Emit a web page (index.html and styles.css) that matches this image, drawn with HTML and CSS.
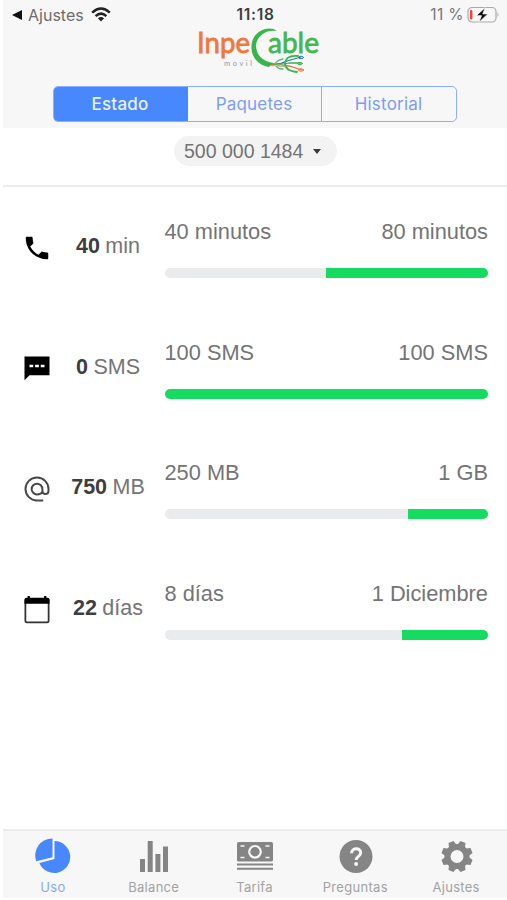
FILE: index.html
```html
<!DOCTYPE html>
<html lang="es">
<head>
<meta charset="utf-8">
<title>Inpecable móvil</title>
<link rel="stylesheet" href="styles.css">
</head>
<body>
<div class="app">
  <header class="header">
    <div class="status">
      <div class="status-left">
        <svg class="back" viewBox="0 0 10 10"><path d="M10 0v10L0 5z"/></svg>
        <span class="back-label">Ajustes</span>
        <svg class="wifi" viewBox="0 0 20 15"><g fill="none" stroke="#222" stroke-width="2.5"><path d="M1.2 5.6Q10-2.6 18.8 5.6"/><path d="M4.6 9.1Q10 4.2 15.4 9.1"/></g><path d="M6.9 11.2Q10 8.7 13.1 11.2L10 14.5z" fill="#222"/></svg>
      </div>
      <span class="clock">11:18</span>
      <div class="status-right">
        <span class="percent">11 %</span>
        <svg class="battery" viewBox="0 0 32 18"><rect x="1" y="1.5" width="28" height="14.5" rx="4" fill="none" stroke="#a9a9a9" stroke-width="1.2"/><path d="M30.5 6.3q2 2.4 0 4.8z" fill="#a9a9a9"/><rect x="3" y="4" width="2.4" height="9.5" rx="1" fill="#ff3b35"/><path d="M18.2 1.5L9.3 9.7h5.2L11.7 16.5l9.2-8.6h-5.1z" fill="#0b0b0b" stroke="#f7f7f7" stroke-width=".8"/></svg>
      </div>
    </div>
    <svg class="logo" viewBox="0 0 128 48">
      <text class="logo-inpe" x="2" y="25" textLength="53" lengthAdjust="spacingAndGlyphs">Inpe</text>
      <text class="logo-able" x="73" y="25" textLength="51" lengthAdjust="spacingAndGlyphs">able</text>
      <text class="logo-movil" x="29" y="38" textLength="28">movil</text>
      <path d="M82 3C75-3 60 2 57 14C54 28 63 37 74 39L78 35C67 33 61 27 61 17C62 8 71 1 82 3z" fill="#39b54a"/>
      <g fill="none" stroke-width="1.3" stroke-linecap="round">
        <path d="M76 36Q85 37 92 33L106 29" stroke="#2878ad"/>
        <path d="M76 36Q87 37 94 35L106 35" stroke="#39b54a"/>
        <path d="M76 37Q85 38 94 38L107 42" stroke="#ef7135"/>
        <path d="M88 31Q79 33 81 37Q82 41 88 41" stroke="#55b976"/>
        <path d="M103 28Q91 27 90 35Q90 43 102 44" stroke="#39b54a" stroke-width="1.8"/>
        <ellipse cx="106" cy="29.500" rx="2.500" ry="1.300" stroke="#2878ad" stroke-width="1"/>
        <ellipse cx="105" cy="35.500" rx="2.500" ry="1.100" stroke="#39b54a" stroke-width="1"/>
        <ellipse cx="106" cy="42" rx="2.500" ry="1.200" stroke="#ef7135" stroke-width="1"/>
        <path d="M77 38l7-1 6 2" stroke="#d5bba4" stroke-width="1"/>
      </g>
    </svg>
    <nav class="segments">
      <span class="segment active">Estado</span>
      <span class="segment">Paquetes</span>
      <span class="segment">Historial</span>
    </nav>
  </header>

  <div class="line-picker">
    <div class="pill"><span>500 000 1484</span><i class="caret"></i></div>
  </div>

  <main class="usage">
    <section class="row">
      <svg class="icon" viewBox="0 0 24 24"><path d="M6.6 10.8c1.4 2.8 3.8 5.1 6.6 6.6l2.2-2.2c.3-.3.7-.4 1-.2 1.1.4 2.3.6 3.6.6.6 0 1 .4 1 1V20c0 .6-.4 1-1 1C10.600 21 3 13.400 3 4c0-.6.4-1 1-1h3.500c.6 0 1 .4 1 1 0 1.200.2 2.400.6 3.600.1.3 0 .7-.2 1z"/></svg>
      <div class="remaining"><b>40</b> min</div>
      <div class="meter"><div class="labels"><span>40 minutos</span><span>80 minutos</span></div><div class="track"><div class="fill" style="width:50%"></div></div></div>
    </section>
    <section class="row">
      <svg class="icon" viewBox="0 0 24 24"><path d="M2 2h20v15H6l-4 4z"/><path d="M6 8.500h3v2H6zm4.500 0h3v2h-3zM15 8.500h3v2h-3z" fill="#fff"/></svg>
      <div class="remaining"><b>0</b> SMS</div>
      <div class="meter"><div class="labels"><span>100 SMS</span><span>100 SMS</span></div><div class="track"><div class="fill" style="width:100%"></div></div></div>
    </section>
    <section class="row">
      <svg class="icon" viewBox="0 0 24 24"><path fill="none" stroke="#484848" stroke-width="1.600" d="M17 21.200h-5A9.200 9.200 0 1 1 21.200 12v1.400c0 3.500-4.900 3.500-4.900 0V12A4.300 4.300 0 1 0 12 16.300c2.200 0 3.900-1 4.500-2.600"/></svg>
      <div class="remaining"><b>750</b> MB</div>
      <div class="meter"><div class="labels"><span>250 MB</span><span>1 GB</span></div><div class="track"><div class="fill" style="width:24.7%"></div></div></div>
    </section>
    <section class="row">
      <svg class="icon" viewBox="0 0 24 24"><rect x="2.700" y="3" width="18.600" height="18.800" rx="1.300" fill="none" stroke="#333" stroke-width="1.400"/><path d="M2 7V3.500Q2 2.200 3.500 2.200H4.500V.8h1.800V2.200h11.400V.8h1.800V2.200h1Q22 2.200 22 3.500V7z"/></svg>
      <div class="remaining"><b>22</b> días</div>
      <div class="meter"><div class="labels"><span>8 días</span><span>1 Diciembre</span></div><div class="track"><div class="fill" style="width:26.600%"></div></div></div>
    </section>
  </main>

  <footer class="tabs">
    <div class="tab current"><svg viewBox="0 0 36 36"><path d="M19.500 3A16 16 0 1 1 4.400 25L19.500 21z"/><path d="M17.500.5V19.300L1.200 23.200A17 17 0 0 1 17.500.5z"/></svg><span>Uso</span></div>
    <div class="tab"><svg viewBox="0 0 36 36"><path d="M4 21h5v13H4zm7.700-18h5v31h-5zm7.700 13h5v18h-5zM27 8.500h5V34h-5z"/></svg><span>Balance</span></div>
    <div class="tab"><svg viewBox="0 0 36 36"><rect y="4" width="36" height="19.500" rx="1.500"/><circle cx="18" cy="13.800" r="5.800" fill="none" stroke="#f7f7f7" stroke-width="2.200"/><path d="M3.500 8h4M28.500 8h4M3.500 19.500h4M28.500 19.500h4" stroke="#f7f7f7" stroke-width="1.500"/><path d="M0 25.500h36v2H0zm0 4.200h36v2H0z"/></svg><span>Tarifa</span></div>
    <div class="tab"><svg viewBox="0 0 36 36"><circle cx="18" cy="18.500" r="16.500"/><path d="M13.500 15.200c.3-6 9.200-5.600 9.200-.5 0 3.600-4.500 3.700-4.500 7.300" fill="none" stroke="#f7f7f7" stroke-width="3"/><circle cx="18.100" cy="26" r="2" fill="#f7f7f7"/></svg><span>Preguntas</span></div>
    <div class="tab"><svg viewBox="0 0 36 36"><g transform="translate(18 18.500)"><circle r="9.500" fill="none" stroke="#858585" stroke-width="6"/><path d="M-4.300-10L-2.700-15.700H2.700L4.300-10zM-4.300 10L-2.700 15.700H2.700L4.300 10z" transform="rotate(22.500)"/><path d="M-4.300-10L-2.700-15.700H2.700L4.300-10zM-4.300 10L-2.700 15.700H2.700L4.300 10z" transform="rotate(67.500)"/><path d="M-4.300-10L-2.700-15.700H2.700L4.300-10zM-4.300 10L-2.700 15.700H2.700L4.300 10z" transform="rotate(112.500)"/><path d="M-4.300-10L-2.700-15.700H2.700L4.300-10zM-4.300 10L-2.700 15.700H2.700L4.300 10z" transform="rotate(157.500)"/></g></svg><span>Ajustes</span></div>
  </footer>
</div>
</body>
</html>
```
FILE: styles.css
```css
* { box-sizing: border-box; }
body { margin: 0; background: #fff; font-family: "Liberation Sans", Arial, sans-serif; color: #747474; }
svg { display: block; flex: none; }
.app { height: 898px; margin-left: 3px; display: flex; flex-direction: column; }
.header { height: 128px; background: #f7f7f7; display: flex; flex-direction: column; align-items: center; flex: none; }
.status { width: 100%; height: 28px; display: grid; grid-template-columns: 1fr auto 1fr; align-items: center; padding: 0 8px 0 9px; font: 16px/28px Inter, sans-serif; }
.status-left, .status-right { display: flex; align-items: center; }
.status-right { justify-content: flex-end; }
.back { width: 10px; height: 10px; fill: #111; }
.back-label { margin-left: 6px; color: #6c6c6c; }
.wifi { width: 20px; height: 15px; margin-left: 7px; }
.clock { color: #3d3d3d; font-weight: 600; font-size: 15.500px; letter-spacing: .7px; padding-top: 1px; }
.percent { color: #777; font-size: 15.500px; letter-spacing: .4px; padding-top: 1px; }
.battery { width: 32px; height: 18px; margin-left: 3px; }
.logo { width: 128px; height: 48px; margin-left: 8px; overflow: visible; }
.logo text { font-family: Lato, sans-serif; }
.logo .logo-inpe, .logo .logo-able { font-size: 29.500px; }
.logo-inpe { fill: #f0783c; stroke: #f0783c; stroke-width: .8px; }
.logo-able { fill: #42b855; stroke: #42b855; stroke-width: .8px; }
.logo .logo-movil { font-size: 7.500px; fill: #9298a2; }
.segments { width: 404px; height: 36px; margin: 10px 1px 0 0; border: 1.500px solid #8fadff; border-radius: 5px; display: grid; grid-template-columns: repeat(3, 1fr); overflow: hidden; font: 17px/35px Inter, sans-serif; letter-spacing: .2px; text-align: center; color: #7c9df5; }
.segment { margin-left: -1px; }
.segment + .segment + .segment { border-left: 1.500px solid #8fadff; }
.segment.active { background: #4788ff; color: #eaf1ff; font-weight: 500; }
.line-picker { height: 59px; flex: none; border-bottom: 2px solid #ececec; display: flex; justify-content: center; padding: 8px 0 0 1px; }
.pill { width: 163px; height: 30px; border-radius: 15px; background: #f3f3f3; display: flex; align-items: center; padding-left: 10px; font-size: 19.500px; }
.caret { border: 4.500px solid transparent; border-top: 5px solid #3a3a3a; border-bottom: 0; margin-left: 10px; }
.usage { flex: 1; padding: 32px 19px 0 21px; font-size: 21.800px; }
.row { height: 120.500px; display: grid; grid-template-columns: 27px 114px 1fr; }
.icon { width: 30px; height: 30px; margin: 14px 0 0 -2px; }
.remaining { margin-top: 14px; line-height: 26px; font-size: 21.500px; text-align: center; word-spacing: -.5px; white-space: nowrap; }
.remaining b { color: #3e3e3e; }
.meter { margin-left: -.5px; }
.labels { display: flex; justify-content: space-between; line-height: 26px; }
.track { height: 10px; margin-top: 23px; border-radius: 5px; background: #e9ebed; display: flex; justify-content: flex-end; overflow: hidden; }
.fill { height: 100%; background: #15dc61; }
.tabs { height: 69px; flex: none; background: #f7f7f7; border-top: 2px solid #ececec; display: grid; grid-template-columns: repeat(5, 1fr); }
.tab { display: flex; flex-direction: column; align-items: center; padding-top: 7px; font: 13px/20px Inter, sans-serif; color: #a2a2a2; fill: #858585; letter-spacing: .3px; }
.tab svg { width: 36px; height: 36px; }
.tab span { margin: 3px 1px 0 0; }
.tab.current { color: #86a8fb; fill: #4788ff; }
```
